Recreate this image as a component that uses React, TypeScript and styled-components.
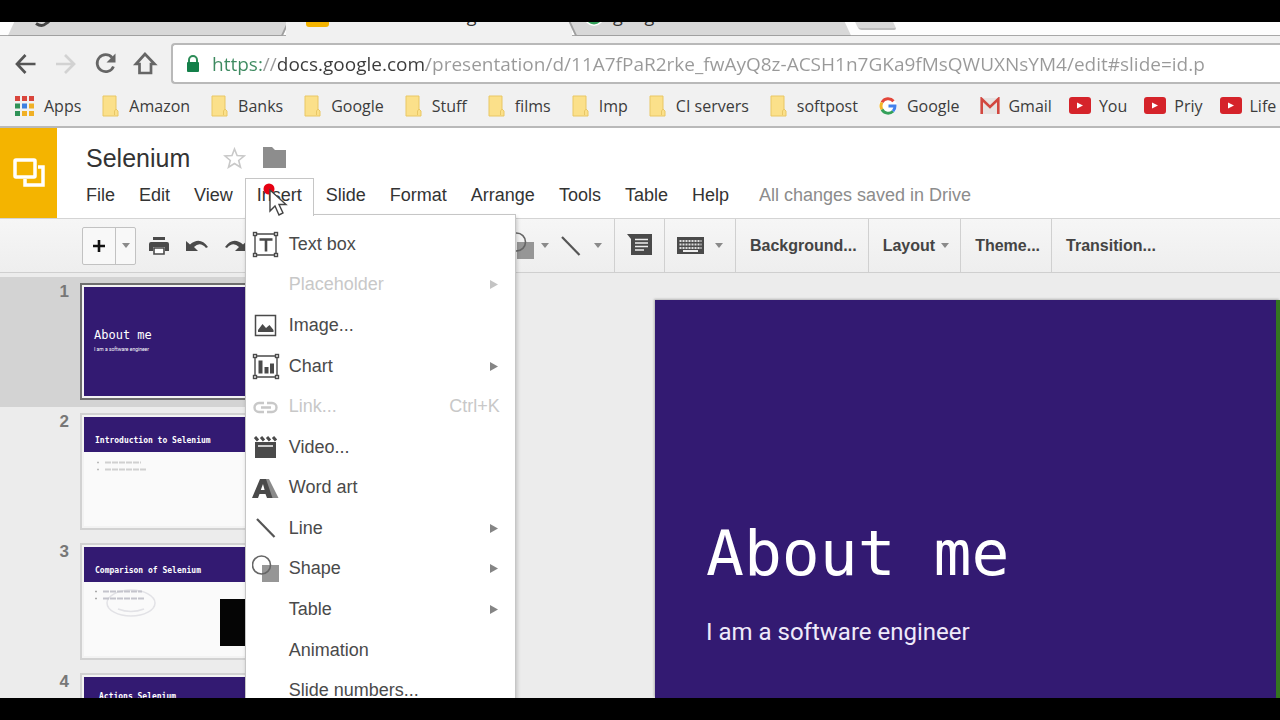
import React from "react";
import styled, { createGlobalStyle, css } from "styled-components";

const sans = `"Liberation Sans", Arial, sans-serif`;
const ui = `"Open Sans", "Noto Sans", sans-serif`;
const mono = `"DejaVu Sans Mono", monospace`;
const purple = "#331a72";

const Global = createGlobalStyle`
  *, *::before, *::after { box-sizing: border-box; }
  body { margin: 0; background: #000; font-family: ${sans}; overflow: hidden; }
  button { font: inherit; color: inherit; background: none; border: 0; padding: 0; margin: 0; }
  a { color: inherit; text-decoration: none; }
  ul, ol { list-style: none; margin: 0; padding: 0; }
  h1, h2, p { margin: 0; font-weight: 400; }
  svg { display: block; flex: none; }
`;

const Frame = styled.div`
  height: 100vh;
  padding: 22px 0;
  background: #000;
`;
const Screen = styled.div`
  height: 100%;
  overflow: hidden;
  display: flex;
  flex-direction: column;
  background: #ececec;
`;

/* Browser chrome */
const TabStrip = styled.div`
  flex: none;
  height: 14px;
  display: flex;
  padding-left: 11px;
  overflow: hidden;
  background: #fdfdfd;
  box-shadow: inset 0 -1px #a8a8a8;
`;
const Tab = styled.button<{ $active?: boolean; $lean: "left" | "right"; $width: number }>`
  position: relative;
  isolation: isolate;
  flex: none;
  width: ${(p) => p.$width}px;
  height: 14px;
  display: flex;
  align-items: flex-end;
  gap: 10px;
  padding: 0 ${(p) => (p.$lean === "left" ? 20 : 13)}px;
  font: 18px/24px ${ui};
  color: #333;
  white-space: nowrap;
  &::before {
    content: "";
    position: absolute;
    z-index: -1;
    inset: 0;
    background: ${(p) => (p.$active ? "#f1f1f1" : "#d8d8d8")};
    border: solid #a0a0a0;
    border-width: ${(p) => (p.$active ? "0" : p.$lean === "left" ? "0 2px 1px 0" : "0 0 1px 2px")};
    transform: skewX(${(p) => (p.$active ? 0 : p.$lean === "left" ? -25 : 25)}deg);
  }
`;
const TabLabel = styled.span`
  margin-bottom: 9px;
`;
const NewTab = styled.button`
  width: 38px;
  height: 8px;
  margin-left: 9px;
  background: #d8d8d8;
  border-bottom: 2px solid #bdbdbd;
  border-radius: 0 0 3px 3px;
  transform: skewX(25deg);
`;
const Chrome = styled.div`
  flex: none;
  background: #f1f1f1;
  border-bottom: 2px solid #b9b9b9;
`;
const NavRow = styled.div`
  display: flex;
  align-items: center;
  height: 49px;
  padding: 7px 0 1px 12px;
`;
const NavButton = styled.button`
  width: 40px;
  height: 32px;
  flex: none;
`;
const Omnibox = styled.label`
  flex: 1;
  height: 41px;
  display: flex;
  align-items: center;
  gap: 12px;
  padding-left: 13px;
  margin-left: -1px;
  background: #fff;
  border: 2px solid #b9b9b9;
  border-right: 0;
  border-radius: 4px 0 0 4px;
`;
const Url = styled.input`
  flex: 1;
  min-width: 0;
  border: 0;
  padding: 0;
  outline: 0;
  font: 19px/32px ${ui};
  color: transparent;
  background: linear-gradient(90deg, #3d8a60 0 50px, #999 50px 65px, #3a3a3a 65px 214px, #999 214px);
  -webkit-background-clip: text;
  background-clip: text;
`;
const Bookmarks = styled.nav`
  display: flex;
  height: 41px;
  padding: 0 0 0 15px;
  overflow: hidden;
`;
const Bookmark = styled.a<{ $tight: boolean }>`
  display: flex;
  align-items: center;
  gap: ${(p) => (p.$tight ? 8 : 10)}px;
  margin-right: ${(p) => (p.$tight ? 17 : 21)}px;
  flex: none;
  font: 16px/24px ${ui};
  color: #3c3c3c;
  white-space: nowrap;
`;

/* Document header */
const Header = styled.header`
  flex: none;
  display: flex;
  height: 91px;
  background: #fff;
  border-bottom: 1px solid #d4d4d4;
`;
const Logo = styled.a`
  width: 57px;
  display: grid;
  place-items: center;
  background: #f4b400;
`;
const HeadMain = styled.div`
  flex: 1;
  padding: 12px 0 0 17px;
`;
const TitleRow = styled.div`
  display: flex;
  align-items: center;
  height: 36px;
  padding-left: 12px;
`;
const DocTitle = styled.h1`
  font-size: 25px;
  line-height: 36px;
  color: #333;
  margin-right: 33px;
`;
const IconButton = styled.button`
  margin-right: 17px;
`;
const MenuBar = styled.nav`
  display: flex;
  height: 36px;
  margin-top: 2px;
`;
const MenuHolder = styled.div`
  position: relative;
`;
const MenuButton = styled.button<{ $open?: boolean }>`
  height: 36px;
  padding: 0 11px 3px;
  font-size: 18px;
  line-height: 30px;
  color: #333;
  border: 1px solid transparent;
  ${(p) =>
    p.$open &&
    css`
      position: relative;
      z-index: 3;
      height: 38px;
      padding-bottom: 5px;
      background: #fff;
      border-color: #c6c6c6;
      border-bottom: 0;
    `}
`;
const SaveState = styled.p`
  margin-left: 18px;
  font-size: 18px;
  line-height: 34px;
  color: #8c8c8c;
`;
const Pointer = styled.svg`
  position: absolute;
  z-index: 4;
  left: 18px;
  top: 4px;
`;
const Menu = styled.ul`
  position: absolute;
  z-index: 2;
  left: 0;
  top: 36px;
  width: 271px;
  height: 508px;
  padding: 9px 0 10px;
  display: grid;
  grid-auto-rows: 1fr;
  background: #fff;
  border: 1px solid #c6c6c6;
  box-shadow: 1px 3px 4px rgba(0, 0, 0, 0.2);
`;
const MenuItem = styled.button`
  width: 100%;
  height: 100%;
  display: grid;
  grid-template-columns: 28px 1fr auto;
  column-gap: 9px;
  align-items: center;
  padding: 0 15px 0 6px;
  font-size: 18px;
  text-align: left;
  color: #4a4a4a;
  &:disabled {
    color: #c8c8c8;
  }
`;
const IconSlot = styled.span`
  display: block;
  height: 28px;
`;

/* Toolbar */
const Toolbar = styled.div`
  flex: none;
  display: flex;
  align-items: stretch;
  height: 54px;
  padding-left: 82px;
  background: linear-gradient(#f6f6f6, #eeeeee);
  border-bottom: 1px solid #cfcfcf;
  color: #444;
`;
const NewSlide = styled.div`
  display: flex;
  align-self: center;
  height: 38px;
  border: 1px solid #c2c2c2;
  border-radius: 2px;
  background: #f8f8f8;
  & > button {
    display: grid;
    place-items: center;
  }
  & > button:first-child {
    width: 33px;
    border-right: 1px solid #c2c2c2;
  }
  & > button:last-child {
    width: 19px;
  }
`;
const History = styled.div`
  display: flex;
  align-items: center;
  gap: 17px;
  width: 359px;
  padding-left: 13px;
`;
const Group = styled.div<{ $text?: boolean; $last?: boolean }>`
  display: flex;
  align-items: center;
  gap: 8px;
  padding: ${(p) => (p.$text ? "0 11px 0 14px" : "0 12px")};
  border-right: ${(p) => (p.$last ? 0 : 1)}px solid #d0d0d0;
`;
const Tool = styled.button<{ $gap?: number }>`
  display: flex;
  align-items: center;
  gap: ${(p) => p.$gap ?? 6}px;
  font-weight: 700;
  font-size: 16px;
  line-height: 24px;
  white-space: nowrap;
`;

/* Workspace */
const Workspace = styled.main`
  flex: 1;
  min-height: 0;
  display: flex;
  overflow: hidden;
`;
const Filmstrip = styled.ol`
  width: 315px;
  flex: none;
  padding-top: 4px;
`;
const FilmRow = styled.li<{ $current?: boolean }>`
  height: 130px;
  display: flex;
  padding-top: 6px;
  background: ${(p) => (p.$current ? "#d3d3d3" : "transparent")};
`;
const FilmNumber = styled.span`
  width: 80px;
  padding-right: 11px;
  text-align: right;
  font-weight: 700;
  font-size: 17px;
  line-height: 18px;
  color: #777;
`;
const Thumb = styled.button<{ $current?: boolean }>`
  width: 206px;
  height: 117px;
  display: flex;
  flex-direction: column;
  text-align: left;
  border: 2px solid ${(p) => (p.$current ? "#6e6e6e" : "#d2d2d2")};
  outline: 2px solid #f3f3f3;
  outline-offset: -4px;
  padding: 2px;
  background: #fafafa;
  font-family: ${mono};
  color: #fff;
  overflow: hidden;
`;
const ThumbCover = styled.span`
  flex: 1;
  width: 100%;
  padding: 39px 0 0 10px;
  background: ${purple};
  font-size: 12px;
  line-height: 18px;
`;
const ThumbSub = styled.span`
  display: block;
  font: 5px/10px Roboto, sans-serif;
`;
const ThumbHead = styled.span<{ $indent: number; $top: number }>`
  flex: none;
  height: 35px;
  width: 100%;
  padding: ${(p) => p.$top}px 0 0 ${(p) => p.$indent}px;
  background: ${purple};
  font-weight: 700;
  font-size: 8px;
  line-height: 14px;
`;
const ThumbBody = styled.span`
  flex: 1;
  width: 100%;
  display: block;
`;
const Canvas = styled.section`
  flex: 1;
  display: flex;
  padding: 27px 0 0 340px;
`;
const Slide = styled.article`
  flex: 1;
  padding: 216px 0 0 51px;
  background: ${purple};
  border-right: 4px solid #34751f;
  box-shadow: -1px -1px 2px #b5b5b5;
  color: #fff;
`;
const SlideTitle = styled.h2`
  font: 63px/76px ${mono};
  white-space: nowrap;
`;
const SlideSub = styled.p`
  margin-top: 23px;
  font: 24px/34px Roboto, sans-serif;
  color: #efeafa;
`;

const ink = "#4a4a4a";

const Caret = () => (
  <svg width="8" height="5" viewBox="0 0 8 5"><path d="M0 0h8L4 5z" fill="#8a8a8a" /></svg>
);
const Folder = () => (
  <svg width="17" height="22" viewBox="0 0 17 22">
    <path d="M1 1h13v13l2 2v5H1z" fill="#fbe08a" stroke="#e9c765" />
    <path d="M12.500 20v-4l1.500-2" fill="none" stroke="#e9c765" />
  </svg>
);
const AppsIcon = () => {
  const c = ["#d9453c", "#d9453c", "#d9453c", "#2f9257", "#3d7fe0", "#f0b026", "#2f9257", "#f0b026", "#f0b026"];
  return (
    <svg width="19" height="20" viewBox="0 0 19 20">
      {c.map((f, i) => <rect key={i} x={(i % 3) * 7} y={Math.floor(i / 3) * 7.500} width="5" height="5" fill={f} />)}
    </svg>
  );
};
const GoogleIcon = () => (
  <svg width="18" height="20" viewBox="0 0 18 20" fill="none" strokeWidth="3">
    <circle cx="9" cy="10" r="9" fill="#fff" />
    <path d="M14.500 5.200A7 7 0 0 0 3 6.400" stroke="#e2463a" />
    <path d="M3 6.400a7.200 7.200 0 0 0 0 7.200" stroke="#f3b62a" />
    <path d="M3 13.600a7 7 0 0 0 11 1.600" stroke="#34a05a" />
    <path d="M14 15.200a7 7 0 0 0 2-5.200H9.500" stroke="#4280ec" />
  </svg>
);
const GmailIcon = () => (
  <svg width="20" height="18" viewBox="0 0 20 18">
    <path d="M1 1h18v16H1z" fill="#e6e3e2" />
    <path d="M1.700 17V2L10 10l8.300-8v15" fill="none" stroke="#d2473f" strokeWidth="2.600" />
  </svg>
);
const YoutubeIcon = () => (
  <svg width="22" height="18" viewBox="0 0 22 18">
    <rect width="22" height="17" rx="3" fill="#d5232a" />
    <path d="M8 5.500l6 3-6 3z" fill="#fff" />
  </svg>
);

const NavIcons: Record<string, React.ReactNode> = {
  Back: <path d="M23.500 16H5.500M13.500 7l-8.500 9 8.500 9" stroke="#555" />,
  Forward: <path d="M4 16h17.500M13 7l9 9-9 9" stroke="#d2d2d2" />,
  Reload: <g stroke="#666"><path d="M20 9.500a8.500 8.500 0 1 0 1.500 9" /><path d="M23.500 5.500v9h-9z" fill="#666" stroke="none" /></g>,
  Home: <path d="M13 6L4 16h3.500v9h11.500v-9h3.500z" stroke="#666" />,
};

const ShapeIcon = () => (
  <svg width="28" height="28" viewBox="0 0 28 28">
    <path d="M10 10h17v17H10z" fill="#969696" />
    <circle cx="9.500" cy="10" r="9" fill="none" stroke="#666" strokeWidth="1.600" />
  </svg>
);
const SlopedLine = () => (
  <svg width="28" height="28" viewBox="0 0 28 28"><path d="M5 5l17.500 18" stroke="#555" strokeWidth="2.200" /></svg>
);
const handles = (w: number) => (
  <g fill="#fff" stroke={ink} strokeWidth="1.400">
    <path d={`M3 4H${w}V25H3z`} fill="none" />
    {[3, w].map((x) => [4, 25].map((y) => <rect key={`${x}-${y}`} x={x - 1.500} y={y - 1.500} width="3" height="3" />))}
  </g>
);
const menuIcons: Record<string, React.ReactNode> = {
  "Text box": <svg width="28" height="28">{handles(24)}<path d="M7.500 9.500h13M14 9.500v12" stroke={ink} strokeWidth="2.600" /></svg>,
  "Image...": (
    <svg width="28" height="28">
      <rect x="3.500" y="4.500" width="20" height="20" fill="none" stroke={ink} strokeWidth="1.500" />
      <path d="M6 21v-2l4.500-6 3.500 4 3.500-3L21.500 19v2z" fill={ink} />
    </svg>
  ),
  Chart: <svg width="28" height="28">{handles(25)}<path d="M8.500 21.500V8.500M14.500 21.500v-6.500M20 21.500v-10" stroke={ink} strokeWidth="4" /></svg>,
  "Link...": (
    <svg width="28" height="28" fill="none" stroke="#c8c8c8" strokeWidth="2.400">
      <path d="M12 10H7a4.500 4.500 0 0 0 0 9h5M15 10h5a4.500 4.500 0 0 1 0 9h-5M9 14.500h10" />
    </svg>
  ),
  "Video...": (
    <svg width="28" height="28">
      <path d="M3 9h21v16H3z" fill={ink} />
      <path d="M6 13h15" stroke="#ddd" strokeWidth="1.800" />
      <path d="M3 4l3 3.500M9 4l3 3.500M15 4l3 3.500M21 4l3 3.500" stroke={ink} strokeWidth="3" />
    </svg>
  ),
  "Word art": (
    <svg width="28" height="28">
      <path d="M9 5h8l9.500 19h-8z" fill="#8b8b8b" />
      <path d="M0 24L8 5h6l6.500 19H15l-1.500-4H7.500L6 24zM8.800 16h3.800L11 10z" fill={ink} fillRule="evenodd" />
    </svg>
  ),
  Line: <SlopedLine />,
  Shape: <ShapeIcon />,
};

const insertMenu: { label: string; sub?: boolean; off?: boolean; key?: string }[] = [
  { label: "Text box" },
  { label: "Placeholder", sub: true, off: true },
  { label: "Image..." },
  { label: "Chart", sub: true },
  { label: "Link...", off: true, key: "Ctrl+K" },
  { label: "Video..." },
  { label: "Word art" },
  { label: "Line", sub: true },
  { label: "Shape", sub: true },
  { label: "Table", sub: true },
  { label: "Animation" },
  { label: "Slide numbers..." },
];

const bookmarks: [string, React.FC][] = [
  ["Apps", AppsIcon],
  ["Amazon", Folder],
  ["Banks", Folder],
  ["Google", Folder],
  ["Stuff", Folder],
  ["films", Folder],
  ["Imp", Folder],
  ["CI servers", Folder],
  ["softpost", Folder],
  ["Google", GoogleIcon],
  ["Gmail", GmailIcon],
  ["You", YoutubeIcon],
  ["Priy", YoutubeIcon],
  ["Life", YoutubeIcon],
];

const InsertMenu = () => (
  <Menu aria-label="Insert">
    {insertMenu.map((m) => (
      <li key={m.label}>
        <MenuItem disabled={m.off}>
          <IconSlot>{menuIcons[m.label]}</IconSlot>
          <span>{m.label}</span>
          {m.key && <span>{m.key}</span>}
          {m.sub && (
            <svg width="11" height="9" viewBox="0 0 11 9"><path d="M1 0l8 4.500-8 4.500z" fill={m.off ? "#c4c4c4" : "#858585"} /></svg>
          )}
        </MenuItem>
      </li>
    ))}
  </Menu>
);

const Bullets = ({ x }: { x: number }) => (
  <svg width="150" height="40" viewBox="0 0 150 40">
    <path d={`M${x} 10.500h2M${x} 17.500h2`} stroke="#bbb" strokeWidth="1.500" />
    <path d={`M${x + 8} 10.500h36M${x + 8} 17.500h42`} stroke="#d0d0d0" strokeWidth="2" strokeDasharray="6 1" />
  </svg>
);

export default function App() {
  return (
    <Frame>
      <Global />
      <Screen>
        <TabStrip>
          <Tab $lean="left" $width={275} aria-label="First tab">
            <svg width="24" height="14" viewBox="0 0 24 14"><path d="M5 1.500q6 4 10 0 4-2 4-6" stroke="#444" strokeWidth="3" fill="none" /></svg>
          </Tab>
          <Tab $active $lean="left" $width={286}>
            <svg width="23" height="14" viewBox="0 0 23 14"><rect y="-18" width="23" height="23" rx="3" fill="#f4b400" /></svg>
            <TabLabel>Selenium - Google Slides</TabLabel>
          </Tab>
          <Tab $lean="right" $width={276}>
            <svg width="18" height="14" viewBox="0 0 18 14">
              <circle cx="9" cy="-6" r="10" fill="#fff" />
              <circle cx="9" cy="-6" r="7" fill="none" stroke="#34a05a" strokeWidth="3" />
            </svg>
            <TabLabel>google</TabLabel>
          </Tab>
          <NewTab aria-label="New tab" />
        </TabStrip>
        <Chrome>
          <NavRow>
            {Object.keys(NavIcons).map((name) => (
              <NavButton key={name} aria-label={name}>
                <svg width="28" height="32" viewBox="0 0 28 32" fill="none" strokeWidth="2.700">{NavIcons[name]}</svg>
              </NavButton>
            ))}
            <Omnibox>
              <svg width="14" height="18" viewBox="0 0 14 18">
                <path d="M3 8V5a4 4 0 0 1 8 0v3" fill="none" stroke="#2c8c57" strokeWidth="2" />
                <rect x="1" y="7" width="12" height="10" rx="1" fill="#14804a" />
              </svg>
              <Url
                aria-label="Address"
                defaultValue="https://docs.google.com/presentation/d/11A7fPaR2rke_fwAyQ8z-ACSH1n7GKa9fMsQWUXNsYM4/edit#slide=id.p"
              />
            </Omnibox>
          </NavRow>
          <Bookmarks aria-label="Bookmarks">
            {bookmarks.map(([name, Icon], i) => (
              <Bookmark key={i} href="#" $tight={Icon === YoutubeIcon || Icon === GmailIcon}>
                <Icon />
                {name}
              </Bookmark>
            ))}
          </Bookmarks>
        </Chrome>

        <Header>
          <Logo href="#" aria-label="Slides home">
            <svg width="32" height="32" viewBox="0 0 32 32" fill="none" stroke="#fff" strokeWidth="3.500">
              <path d="M12 22v6h18V10h-5" />
              <rect x="2" y="3" width="20" height="17" rx="1" />
            </svg>
          </Logo>
          <HeadMain>
            <TitleRow>
              <DocTitle>Selenium</DocTitle>
              <IconButton aria-label="Star">
                <svg width="23" height="22" viewBox="0 0 23 22">
                  <path d="M11.500 2l2.600 6.600 7 .4-5.400 4.500 1.800 6.800-6-3.800-6 3.800 1.800-6.800L2 9l7-.4z" fill="none" stroke="#c9c9c9" strokeWidth="1.600" />
                </svg>
              </IconButton>
              <IconButton aria-label="Move to folder">
                <svg width="24" height="22" viewBox="0 0 24 22"><path d="M0 0h9l3 3h11v18H0z" fill="#8d8d8d" /></svg>
              </IconButton>
            </TitleRow>
            <MenuBar>
              {["File", "Edit", "View", "Insert", "Slide", "Format", "Arrange", "Tools", "Table", "Help"].map((name) => (
                <MenuHolder key={name}>
                  <MenuButton $open={name === "Insert"}>{name}</MenuButton>
                  {name === "Insert" && (
                    <>
                      <InsertMenu />
                      <Pointer width="28" height="38" viewBox="0 0 28 38">
                        <circle cx="6" cy="7" r="5.500" fill="#e60012" />
                        <path d="M7 8v21l5-5 4 9 4-2-4-8.500h7z" fill="#fff" stroke="#444" strokeWidth="1.400" />
                      </Pointer>
                    </>
                  )}
                </MenuHolder>
              ))}
              <SaveState>All changes saved in Drive</SaveState>
            </MenuBar>
          </HeadMain>
        </Header>

        <Toolbar role="toolbar">
          <NewSlide>
            <button aria-label="New slide">
              <svg width="12" height="12"><path d="M6 0v12M0 6h12" stroke="#111" strokeWidth="2.600" /></svg>
            </button>
            <button aria-label="New slide layouts"><Caret /></button>
          </NewSlide>
          <History>
            <Tool aria-label="Print">
              <svg width="20" height="20" viewBox="0 0 20 20">
                <path d="M4 1h12v3H4zM2 6h16q2 0 2 2v7h-4v-4H4v4H0V8q0-2 2-2z" fill={ink} />
                <path d="M5 12h10v6H5z" fill="#fff" stroke={ink} strokeWidth="1.600" />
              </svg>
            </Tool>
            <Tool aria-label="Undo">
              <svg width="22" height="14" viewBox="0 0 22 14">
                <path d="M0 2l4 3.500Q14-3 22 8l-2 1q-6-7-12-1l4 4H0z" fill={ink} />
              </svg>
            </Tool>
            <Tool aria-label="Redo">
              <svg width="22" height="14" viewBox="0 0 22 14">
                <path d="M22 2l-4 3.500Q8-3 0 8l2 1q6-7 12-1l-4 4h12z" fill={ink} />
              </svg>
            </Tool>
          </History>
          <Group>
            <Tool aria-label="Shape"><ShapeIcon /><Caret /></Tool>
            <Tool aria-label="Line" $gap={9}><SlopedLine /><Caret /></Tool>
          </Group>
          <Group>
            <Tool aria-label="Comment">
              <svg width="25" height="24" viewBox="0 0 25 24">
                <path d="M0 0h25v21H4V5z" fill={ink} />
                <path d="M8 5.500h13M8 9h13M8 12.500h13M8 16h9" stroke="#eee" strokeWidth="1.500" />
              </svg>
            </Tool>
          </Group>
          <Group>
            <Tool aria-label="Input tools" $gap={11}>
              <svg width="27" height="18" viewBox="0 0 27 18">
                <rect width="27" height="17" fill={ink} />
                <path d="M2.500 4h22M2.500 7.500h22M2.500 11h22" stroke="#ddd" strokeWidth="2" strokeDasharray="2 1" />
                <path d="M6 14h15" stroke="#eee" strokeWidth="2" />
              </svg>
              <Caret />
            </Tool>
          </Group>
          <Group $text><Tool>Background...</Tool></Group>
          <Group $text><Tool>Layout <Caret /></Tool></Group>
          <Group $text><Tool>Theme...</Tool></Group>
          <Group $text $last><Tool>Transition...</Tool></Group>
        </Toolbar>

        <Workspace>
          <Filmstrip>
            <FilmRow $current>
              <FilmNumber>1</FilmNumber>
              <Thumb $current>
                <ThumbCover>
                  About me
                  <ThumbSub>I am a software engineer</ThumbSub>
                </ThumbCover>
              </Thumb>
            </FilmRow>
            <FilmRow>
              <FilmNumber>2</FilmNumber>
              <Thumb>
                <ThumbHead $indent={11} $top={17}>Introduction to Selenium</ThumbHead>
                <ThumbBody><Bullets x={13} /></ThumbBody>
              </Thumb>
            </FilmRow>
            <FilmRow>
              <FilmNumber>3</FilmNumber>
              <Thumb>
                <ThumbHead $indent={11} $top={17}>Comparison of Selenium</ThumbHead>
                <ThumbBody>
                  <svg width="198" height="74" viewBox="0 0 198 74">
                    <ellipse cx="47" cy="21" rx="24" ry="13" fill="none" stroke="#e2e2e6" strokeWidth="1.500" />
                    <path d="M34 27q13 5 26 0" fill="none" stroke="#e2e2e6" strokeWidth="1.500" />
                    <path d="M11 9.500h2M11 16.500h2" stroke="#aaa" strokeWidth="1.500" />
                    <path d="M19 9.500h39M19 16.500h41" stroke="#c4c4cc" strokeWidth="2" strokeDasharray="6 1" />
                    <rect x="136" y="17" width="62" height="47" fill="#050505" />
                  </svg>
                </ThumbBody>
              </Thumb>
            </FilmRow>
            <FilmRow>
              <FilmNumber>4</FilmNumber>
              <Thumb>
                <ThumbHead $indent={15} $top={13}>Actions Selenium</ThumbHead>
                <ThumbBody />
              </Thumb>
            </FilmRow>
          </Filmstrip>
          <Canvas>
            <Slide>
              <SlideTitle>About me</SlideTitle>
              <SlideSub>I am a software engineer</SlideSub>
            </Slide>
          </Canvas>
        </Workspace>
      </Screen>
    </Frame>
  );
}
